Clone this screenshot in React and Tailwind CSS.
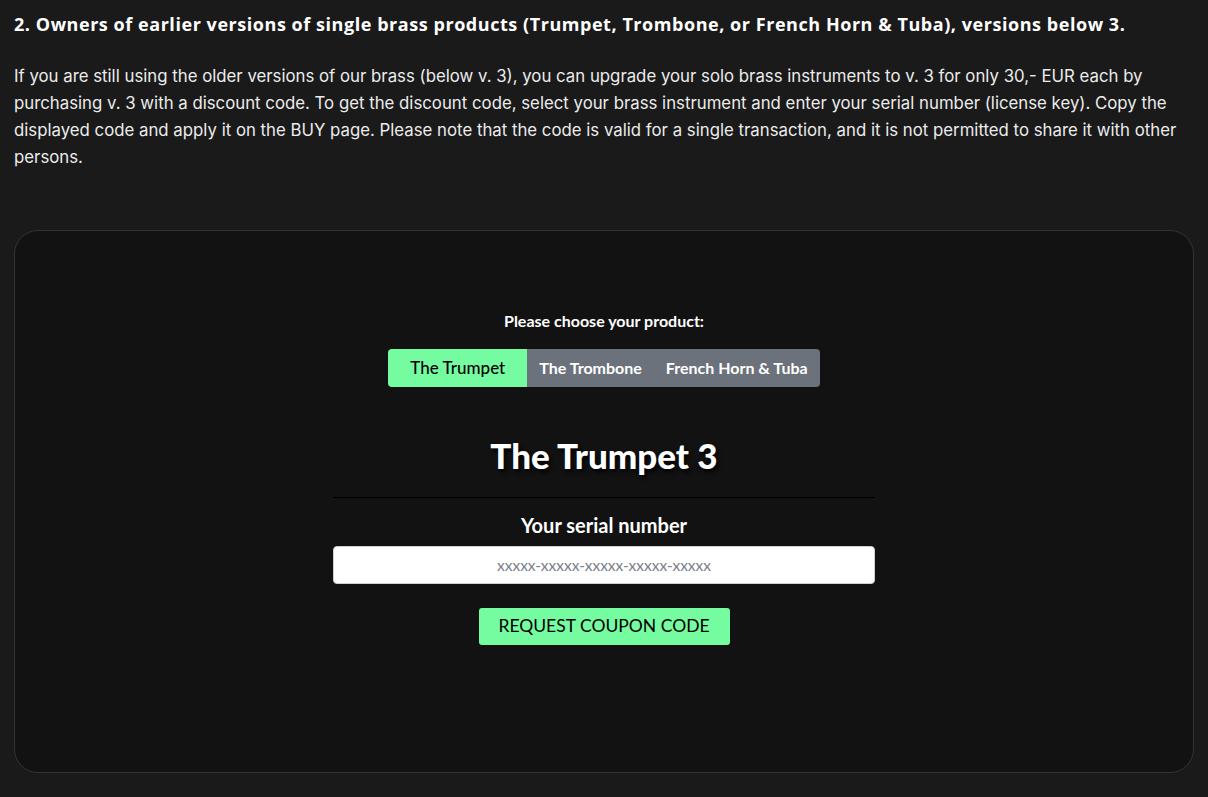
import React, { useState } from 'react'

const products = ['The Trumpet', 'The Trombone', 'French Horn & Tuba']

export default function App() {
  const [selected, setSelected] = useState(0)
  const [serial, setSerial] = useState('')

  return (
    <div className="min-h-[797px] bg-[#1a1a1a] px-[14px] pt-[11px] pb-6 text-white font-['Inter',sans-serif]">
      <h2 className="text-[18px] leading-[26px] font-bold tracking-[0.55px] font-['Open_Sans',sans-serif]">
        2. Owners of earlier versions of single brass products (Trumpet, Trombone, or French Horn &amp; Tuba), versions below 3.
      </h2>

      <p className="mt-[26px] text-[16.8px] leading-[27px] text-[#ececec]">
        If you are still using the older versions of our brass (below v. 3), you can upgrade your solo brass instruments to v. 3 for only 30,- EUR each by purchasing v. 3 with a discount code. To get the discount code, select your brass instrument and enter your serial number (license key). Copy the displayed code and apply it on the BUY page. Please note that the code is valid for a single transaction, and it is not permitted to share it with other persons.
      </p>

      <div className="mt-[59px] h-[543px] rounded-[24px] border border-[#333333] bg-[#121212] flex flex-col items-center pt-[80px] font-['Lato',sans-serif]">
        <p className="text-[16px] leading-[20px] font-bold">Please choose your product:</p>

        <div className="mt-[18px] flex rounded-[4px] overflow-hidden h-[38px]">
          {products.map((p, i) => (
            <button
              key={p}
              onClick={() => setSelected(i)}
              className={
                i === selected
                  ? 'px-[22px] text-[17px] bg-[#75fba0] text-black font-medium'
                  : 'px-[12px] text-[16px] bg-[#6c727b] text-white font-bold'
              }
            >
              {p}
            </button>
          ))}
        </div>

        <h1 className="mt-[47px] text-[35px] leading-[42px] font-black [text-shadow:2px_3px_4px_rgba(0,0,0,0.9)]">
          {products[selected] + ' 3'}
        </h1>

        <div className="mt-[21px] w-[542px] border-t border-[#000000]" />

        <p className="mt-[15px] text-[20px] leading-[24px] font-bold">Your serial number</p>

        <input
          value={serial}
          onChange={(e) => setSerial(e.target.value)}
          placeholder="xxxxx-xxxxx-xxxxx-xxxxx-xxxxx"
          className="mt-[9px] w-[542px] h-[38px] rounded-[4px] bg-white border border-[#cfcfcf] text-center text-[15.5px] text-black placeholder:text-[#7a8089] outline-none"
        />

        <button className="mt-[24px] w-[251px] h-[37px] rounded-[3px] bg-[#75fba0] text-black text-[17.5px] uppercase">
          Request coupon code
        </button>
      </div>
    </div>
  )
}
